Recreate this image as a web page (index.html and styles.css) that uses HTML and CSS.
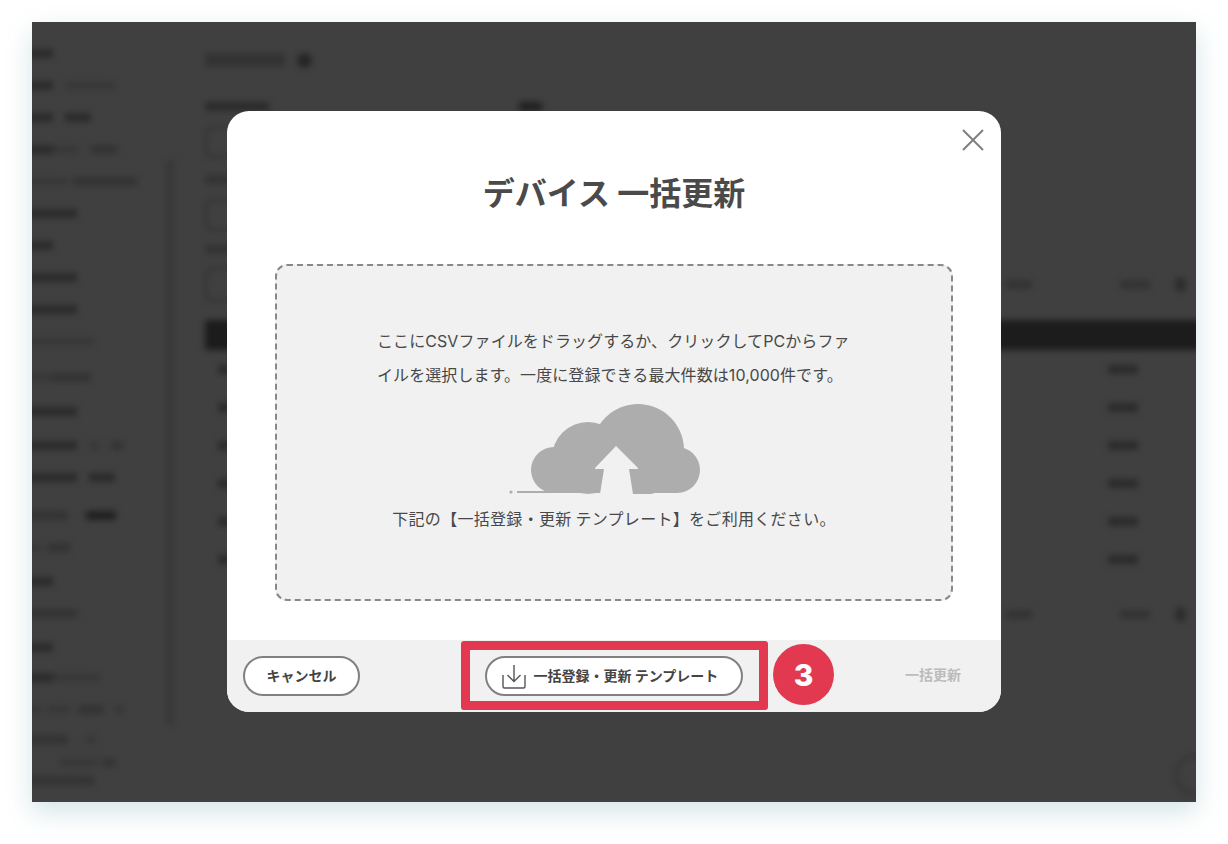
FILE: index.html
```html
<!DOCTYPE html>
<html lang="ja">
<head>
<meta charset="utf-8">
<title>デバイス 一括更新</title>
<link rel="stylesheet" href="styles.css">
</head>
<body>
<div class="frame">
  <div class="backdrop" aria-hidden="true">
    <div class="sidebar">
      <div class="row"><i class="b d w21"></i></div>
      <div class="row"><i class="b d w21"></i><i class="b f w50 s12"></i></div>
      <div class="row"><i class="b d w21"></i><i class="b d w25 s12"></i></div>
      <div class="row"><i class="b d w21"></i><i class="b f w25"></i><i class="b m w25 s12"></i></div>
      <div class="row"><i class="b f w38"></i><i class="b m w63 s5"></i></div>
      <div class="row"><i class="b d w46"></i></div>
      <div class="row"><i class="b d w21"></i></div>
      <div class="row"><i class="b d w46"></i></div>
      <div class="row"><i class="b d w46"></i></div>
      <div class="row"><i class="b f w63"></i></div>
      <div class="row more"><i class="b f w21"></i><i class="b m w38"></i></div>
      <div class="row bump"><i class="b d w46"></i></div>
      <div class="row bump"><i class="b d w46"></i><i class="b f w10 s12"></i><i class="b m w12 s12"></i></div>
      <div class="row"><i class="b d w46"></i><i class="b d w25 s12"></i></div>
      <div class="row most"><i class="b m w38"></i><i class="b k w30 s18"></i></div>
      <div class="row"><i class="b f w12"></i><i class="b m w21 s5"></i></div>
      <div class="row bump"><i class="b d w21"></i></div>
      <div class="row"><i class="b m w46"></i></div>
      <div class="row bump"><i class="b d w21"></i></div>
      <div class="row pull"><i class="b d w21"></i><i class="b f w46"></i></div>
      <div class="row"><i class="b f w12"></i><i class="b f w21 s5"></i><i class="b m w25 s8"></i><i class="b f w10 s10"></i></div>
      <div class="row pull"><i class="b m w38"></i><i class="b f w10 s18"></i></div>
      <div class="row short"><i class="b f w38 in28"></i><i class="b m w12 s5"></i></div>
      <div class="row tiny"><i class="b m w63"></i></div>
    </div>
    <div class="rule"></div>
    <div class="main">
      <div class="title-row"><i class="b m w80 tall"></i><i class="dot"></i></div>
      <div class="label-row"><i class="b d w63"></i><i class="b k w21 far"></i></div>
      <div class="box"></div>
      <div class="label-row second"><i class="b m w46"></i></div>
      <div class="box"></div>
      <div class="label-row third"><i class="b m w38"></i></div>
      <div class="box third-box"></div>
      <div class="pager first-pager"><i class="b m w25"></i><i class="b m w30 s88"></i><i class="dot small"></i></div>
      <div class="thead"></div>
      <div class="trow"><i class="b d w12"></i><i class="b d w30"></i></div>
      <div class="trow"><i class="b d w12"></i><i class="b d w30"></i></div>
      <div class="trow"><i class="b d w12"></i><i class="b d w30"></i></div>
      <div class="trow"><i class="b d w12"></i><i class="b d w30"></i></div>
      <div class="trow"><i class="b d w12"></i><i class="b d w30"></i></div>
      <div class="trow"><i class="b d w12"></i><i class="b d w30"></i></div>
      <div class="pager last-pager"><i class="b m w25"></i><i class="b m w30 s88"></i><i class="dot small"></i></div>
    </div>
    <div class="fab"></div>
  </div>

  <section class="modal">
    <button class="close" type="button" aria-label="閉じる">
      <svg viewBox="0 0 22 22" width="22" height="22"><path d="M1 1 21 21M21 1 1 21" fill="none" stroke="#808080" stroke-width="2"/></svg>
    </button>
    <div class="modal-body">
      <h1 class="modal-title">デバイス 一括更新</h1>
      <div class="dropzone">
        <p class="drop-text">ここにCSVファイルをドラッグするか、クリックしてPCからファイルを選択します。一度に登録できる最大件数は10,000件です。</p>
        <svg class="cloud" viewBox="509 404 192 90" width="192" height="90">
          <g fill="#adadad">
            <circle cx="554" cy="470" r="23"/>
            <circle cx="588" cy="458" r="36"/>
            <circle cx="638" cy="450" r="46"/>
            <circle cx="677" cy="470" r="23"/>
            <rect x="554" y="450" width="123" height="43"/>
            <rect x="517" y="491" width="40" height="2"/>
            <circle cx="511" cy="492" r="1.6"/>
          </g>
          <path d="M616 446 638 468V469H629L633 494H600L604 469H595V468Z" fill="#f1f1f1"/>
        </svg>
        <p class="drop-note">下記の【一括登録・更新 テンプレート】をご利用ください。</p>
      </div>
    </div>
    <div class="modal-foot">
      <div class="foot-left"><button class="pill cancel" type="button">キャンセル</button></div>
      <div class="foot-center">
        <button class="pill template" type="button">
          <svg viewBox="0 0 24 25" width="24" height="25"><path d="M12 1V17M5.5 11 12 17.500 18.500 11M1 11V22.500Q1 24 2.500 24H21.500Q23 24 23 22.500V11" fill="none" stroke="#555" stroke-width="1.400"/></svg>
          <span class="pill-label">一括登録・更新 テンプレート</span>
        </button>
        <div class="callout"></div>
        <div class="badge">3</div>
      </div>
      <div class="foot-right"><span class="submit">一括更新</span></div>
    </div>
  </section>
</div>
</body>
</html>
```

FILE: styles.css
```css
* { box-sizing: border-box; }
html, body { margin: 0; height: 100%; background: #fff; overflow: hidden; }
body {
  padding: 22px 32px;
  font-family: "Noto Sans CJK JP", "Noto Sans", sans-serif;
  color: #444;
}
p, h1 { margin: 0; }
button { font-family: inherit; }

.frame {
  position: relative;
  width: 1164px;
  height: 780px;
  overflow: hidden;
  background: #404040;
  box-shadow: 0 10px 24px rgba(60, 130, 140, .22);
}

/* blurred page behind the dialog */
.backdrop {
  display: flex;
  width: 100%;
  height: 100%;
  filter: blur(3.2px);
}
.sidebar { width: 133px; flex: none; padding-top: 15px; }
.row { height: 32px; display: flex; align-items: center; margin-left: -10px; }
.row .b:first-child { box-sizing: content-box; padding-left: 8px; }
.row.more { margin-top: 4px; }
.row.most { margin-top: 6px; }
.row.bump { margin-top: 2px; }
.row.pull { margin-top: -2px; }
.row.short { height: 24px; margin-top: -5px; margin-bottom: -3px; }
.row.tiny { height: 18px; }
.rule { width: 10px; height: 565px; margin: 138px 30px 0 0; background: #393939; flex: none; }
.main { flex: 1; min-width: 0; padding-top: 31px; }

.b { display: block; height: 9px; flex: none; }
.d { background: #2b2b2b; }
.k { background: #202020; }
.m { background: #333; }
.f { background: #383838; }
.tall { height: 14px; }
.w10 { width: 10px; } .w12 { width: 12px; } .w21 { width: 23px; } .w25 { width: 26px; }
.w30 { width: 30px; } .w38 { width: 38px; } .w46 { width: 47px; } .w50 { width: 50px; }
.w63 { width: 64px; } .w80 { width: 80px; }
.s5 { margin-left: 5px; } .s8 { margin-left: 8px; } .s10 { margin-left: 10px; }
.s12 { margin-left: 12px; } .s18 { margin-left: 18px; } .s88 { margin-left: 88px; }
.row .in28:first-child { padding-left: 0; margin-left: 38px; }

.title-row { display: flex; align-items: center; gap: 12px; height: 14px; }
.dot { display: block; width: 15px; height: 15px; border-radius: 50%; background: #252525; }
.dot.small { width: 11px; height: 15px; margin-left: 25px; background: #2b2b2b; }
.label-row { display: flex; margin-top: 35px; }
.far { margin-left: 250px; }
.label-row.second { margin-top: 17px; }
.label-row.third { margin-top: 14px; }
.box { width: 340px; height: 32px; margin-top: 15px; border: 2px solid #2e2e2e; border-radius: 8px; }
.third-box { height: 35px; margin-top: 13px; }
.pager { display: flex; align-items: center; justify-content: flex-end; margin-right: 10px; }
.first-pager { margin-top: -25px; height: 15px; }
.last-pager { margin-top: 29px; height: 15px; }
.thead { height: 30px; margin: 28px -20px 0 0; background: #1c1c1c; }
.trow { height: 38px; display: flex; align-items: center; justify-content: space-between; padding: 0 58px 0 13px; }
.fab { position: absolute; left: 1143px; top: 733px; width: 40px; height: 40px; border-radius: 50%; border: 2px solid #2e2e2e; }

/* dialog */
.modal {
  position: absolute;
  left: 195px;
  top: 89px;
  width: 774px;
  height: 601px;
  display: flex;
  flex-direction: column;
  background: #fff;
  border-radius: 22px;
  overflow: hidden;
}
.close {
  position: absolute;
  right: 17px;
  top: 18px;
  width: 22px;
  height: 22px;
  padding: 0;
  border: 0;
  background: none;
}
.close svg { display: block; }
.modal-body { flex: 1; padding: 56px 48px 0; }
.modal-title {
  text-align: center;
  font-size: 32px;
  line-height: 48px;
  font-weight: 700;
  color: #4a4a4a;
}
.dropzone {
  height: 337px;
  margin-top: 49px;
  padding-top: 58px;
  display: flex;
  flex-direction: column;
  align-items: center;
  background: #f1f1f1;
  border: 2px dashed #888;
  border-radius: 12px;
}
.drop-text {
  width: 474px;
  font-family: "Inter", "Noto Sans CJK JP", sans-serif;
  font-size: 16px;
  line-height: 34px;
  letter-spacing: .08px;
  color: #484848;
}
.cloud { display: block; margin: 12px 19px 0 0; }
.drop-note { margin-top: 12px; font-size: 16px; line-height: 24px; letter-spacing: .3px; color: #484848; }

.modal-foot {
  height: 72px;
  flex: none;
  display: grid;
  grid-template-columns: 1fr auto 1fr;
  align-items: center;
  padding: 0 40px 0 16px;
  background: #f1f1f1;
}
.foot-right { text-align: right; }
.foot-center { position: relative; margin-left: 24px; }
.pill {
  display: flex;
  align-items: center;
  justify-content: center;
  height: 40px;
  padding: 0 0 3px;
  background: #fff;
  border: 2px solid #808080;
  border-radius: 20px;
  font-size: 14px;
  font-weight: 700;
  color: #444;
}
.cancel { width: 117px; }
.template { width: 258px; gap: 8px; padding: 0 8px 0 0; }
.pill-label { padding-bottom: 3px; }
.template svg { display: block; }
.submit { display: block; margin-top: -5px; font-size: 14px; font-weight: 700; color: #bbb; }
.callout {
  position: absolute;
  left: -24px;
  top: -15px;
  width: 307px;
  height: 69px;
  border: 9px solid #e23850;
  border-radius: 3px;
}
.badge {
  position: absolute;
  left: 288px;
  top: -12px;
  width: 61px;
  height: 61px;
  display: flex;
  align-items: center;
  justify-content: center;
  border-radius: 50%;
  background: #e23850;
  color: #fff;
  font-family: "Inter", "Liberation Sans", sans-serif;
  font-size: 30px;
  font-weight: 800;
}
```
